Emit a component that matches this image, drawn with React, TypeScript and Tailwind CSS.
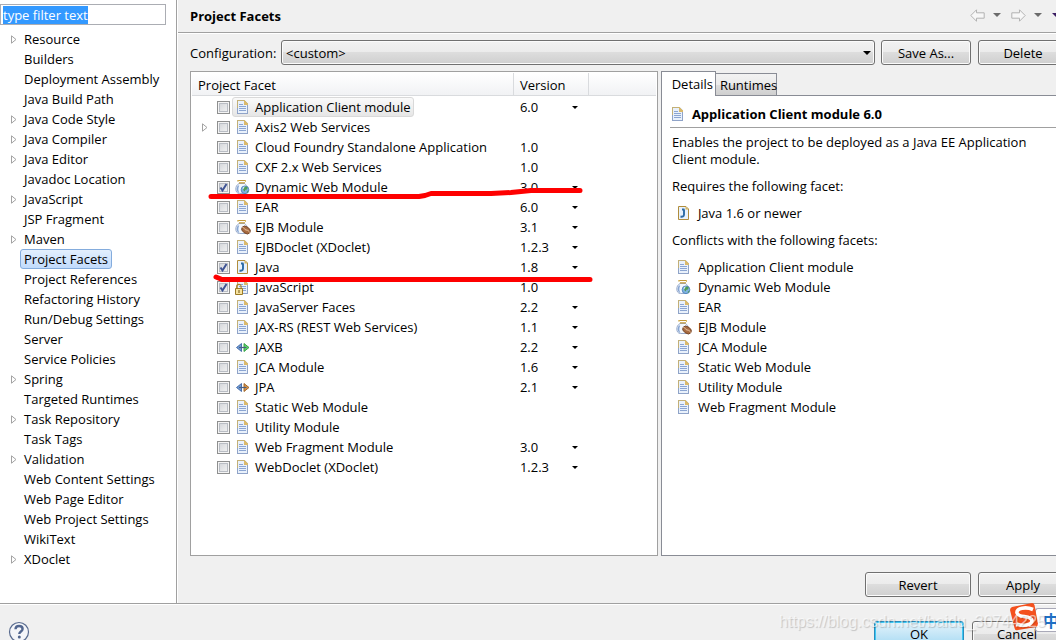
import { useEffect, useRef } from 'react'
import type { ReactNode } from 'react'
import clsx from 'clsx'

type IconName = 'doc' | 'web' | 'ejb' | 'java' | 'locked' | 'jaxb' | 'jpa'

interface Facet {
  name: string
  icon?: IconName
  version?: string
  fixed?: boolean
  checked?: boolean
  expandable?: boolean
}

const categories: { name: string; expandable?: boolean }[] = [
  { name: 'Resource', expandable: true },
  { name: 'Builders' },
  { name: 'Deployment Assembly' },
  { name: 'Java Build Path' },
  { name: 'Java Code Style', expandable: true },
  { name: 'Java Compiler', expandable: true },
  { name: 'Java Editor', expandable: true },
  { name: 'Javadoc Location' },
  { name: 'JavaScript', expandable: true },
  { name: 'JSP Fragment' },
  { name: 'Maven', expandable: true },
  { name: 'Project Facets' },
  { name: 'Project References' },
  { name: 'Refactoring History' },
  { name: 'Run/Debug Settings' },
  { name: 'Server' },
  { name: 'Service Policies' },
  { name: 'Spring', expandable: true },
  { name: 'Targeted Runtimes' },
  { name: 'Task Repository', expandable: true },
  { name: 'Task Tags' },
  { name: 'Validation', expandable: true },
  { name: 'Web Content Settings' },
  { name: 'Web Page Editor' },
  { name: 'Web Project Settings' },
  { name: 'WikiText' },
  { name: 'XDoclet', expandable: true },
]

const facets: Facet[] = [
  { name: 'Application Client module', version: '6.0' },
  { name: 'Axis2 Web Services', expandable: true },
  { name: 'Cloud Foundry Standalone Application', version: '1.0', fixed: true },
  { name: 'CXF 2.x Web Services', version: '1.0', fixed: true },
  { name: 'Dynamic Web Module', icon: 'web', version: '3.0', checked: true },
  { name: 'EAR', version: '6.0' },
  { name: 'EJB Module', icon: 'ejb', version: '3.1' },
  { name: 'EJBDoclet (XDoclet)', version: '1.2.3' },
  { name: 'Java', icon: 'java', version: '1.8', checked: true },
  { name: 'JavaScript', icon: 'locked', version: '1.0', fixed: true, checked: true },
  { name: 'JavaServer Faces', version: '2.2' },
  { name: 'JAX-RS (REST Web Services)', version: '1.1' },
  { name: 'JAXB', icon: 'jaxb', version: '2.2' },
  { name: 'JCA Module', version: '1.6' },
  { name: 'JPA', icon: 'jpa', version: '2.1' },
  { name: 'Static Web Module' },
  { name: 'Utility Module' },
  { name: 'Web Fragment Module', version: '3.0' },
  { name: 'WebDoclet (XDoclet)', version: '1.2.3' },
]

const conflicts: { name: string; icon?: IconName }[] = [
  { name: 'Application Client module' },
  { name: 'Dynamic Web Module', icon: 'web' },
  { name: 'EAR' },
  { name: 'EJB Module', icon: 'ejb' },
  { name: 'JCA Module' },
  { name: 'Static Web Module' },
  { name: 'Utility Module' },
  { name: 'Web Fragment Module' },
]

function Page() {
  return (
    <g shapeRendering="crispEdges">
      <path d="M3 1h7l3 3v11H3z" fill="#e9f1fb" />
      <path d="M2 1h8v1H3v7H2z" fill="#c3b077" />
      <path d="M2 9h1v5h10v1H2zM12 5h1v10h-1z" fill="#8fa3c8" />
      <path d="M9 1h1v1h1v1h1v1h1v2H9z" fill="#d9b96c" />
      <path d="M4 5h4v1H4zM4 7h7v1H4zM4 9h7v1H4zM4 11h7v1H4z" fill="#8ba5d2" />
    </g>
  )
}

function Jar() {
  return (
    <g>
      <path d="M4 4.500C1.500 6 .8 8 .8 10c0 2.500 1.200 4.500 3.700 4.500h6c1.500-1 2-3 1.800-5C12 7 11 5.500 9.500 4.500z" fill="#f3f8fd" stroke="#8fa3c6" strokeWidth=".9" />
      <path d="M3 6.500C.8 9 1.200 13 4.500 14 3 12 3 9 4.200 6.500z" fill="#88a6d3" />
      <path d="M2.500 1.500h8.500M4 3.800h6" stroke="#c49a3b" strokeWidth="1.200" />
      <path d="M3 1v2M10.500 1v2" stroke="#dcbd66" />
    </g>
  )
}

function Icon({ name = 'doc' }: { name?: IconName }) {
  return (
    <svg viewBox="0 0 16 16" className="size-4 shrink-0" aria-hidden="true">
      {name === 'doc' && <Page />}
      {name === 'web' && (
        <>
          <Jar />
          <circle cx="10" cy="10.800" r="3.900" fill="#7fb2e0" stroke="#4a7cb8" strokeWidth=".8" />
          <path d="M9 8c1.500-1 3-.5 3.800.5l-.8 2-1.500.3-1 1.700C8 11.500 7.800 9.500 9 8zM12 12.500l1.500-1c0 1.200-.8 2.200-1.800 2.600z" fill="#4f9d55" />
          <path d="M7.500 9.500c.5-1.200 1.200-1.800 2.200-2l-1 2.300z" fill="#e6f3fb" />
        </>
      )}
      {name === 'ejb' && (
        <>
          <Jar />
          <g transform="rotate(35 11 11)">
            <ellipse cx="11" cy="11" rx="4.700" ry="3.300" fill="#a76b42" stroke="#6d3f22" strokeWidth=".8" />
            <path d="M6.500 11c2-1.500 3 1 4.500 0s3-1 4.500 0" fill="none" stroke="#f0cda8" strokeWidth=".8" />
          </g>
        </>
      )}
      {name === 'java' && (
        <g>
          <path d="M3 1.500h7L12.500 4v10.500H3z" fill="#e8f2fc" />
          <path d="M2.500 1.500H10L12.500 4v10.500h-10z" fill="none" stroke="#b08d3c" />
          <path d="M9.500 1.500v3h3z" fill="#d7b45d" />
          <path d="M6 4.500h2.500M8 4.500v5c0 2-1.500 2.500-3.500 2" fill="none" stroke="#2c6aa5" strokeWidth="1.900" />
        </g>
      )}
      {name === 'locked' && (
        <>
          <Page />
          <path d="M1.700 9.500V7.500a2.200 2.200 0 0 1 4.400 0v2" fill="none" stroke="#a8852c" strokeWidth="1.200" />
          <path d="M.5 9.500h7v6h-7z" fill="#f7e3a0" stroke="#9b7a25" />
          <path d="M3.500 11h1v3h-1z" fill="#6e5517" />
        </>
      )}
      {(name === 'jaxb' || name === 'jpa') && (
        <g strokeWidth=".9" strokeLinejoin="round">
          <path d="M6.500 4.500v8L1.500 8.500z" fill="#6f9cd6" stroke="#3f67a5" />
          <path
            d="M9 4.500v8l5-4z"
            fill={name === 'jaxb' ? '#5fd66a' : '#d9964a'}
            stroke={name === 'jaxb' ? '#2d9a3d' : '#9a5f22'}
          />
          <path d="M4 8.500h7.500" stroke="#4b5f80" strokeWidth="1.200" />
        </g>
      )}
    </svg>
  )
}

function TreeArrow() {
  return (
    <svg viewBox="0 0 6 9" className="h-[9px] w-[6px]" aria-hidden="true">
      <path d="M.5.8v7.400L5 4.500z" fill="#fff" stroke="#a3a3a3" />
    </svg>
  )
}

function Caret({ className = 'h-1 w-2' }: { className?: string }) {
  return (
    <svg
      viewBox="0 0 8 4"
      className={clsx('pointer-events-none shrink-0', className)}
      aria-hidden="true">
      <path d="M0 0h8L4 4z" fill="currentColor" />
    </svg>
  )
}

function HistoryArrow({ flip }: { flip?: boolean }) {
  return (
    <svg viewBox="0 0 15 13" className={clsx('h-[13px] w-[15px]', flip && '-scale-x-100')} aria-hidden="true">
      <path d="M.8 6.500 6.500.8v3h7.700v5.400H6.500v3z" fill="#f7f7f7" stroke="#b3b3b3" strokeLinejoin="round" />
    </svg>
  )
}

function PushButton({
  children,
  className,
  primary,
}: {
  children: ReactNode
  className: string
  primary?: boolean
}) {
  return (
    <button
      type="button"
      className={clsx(
        'h-[25px] shrink-0 rounded-[3px] border',
        primary
          ? 'border-[#2a8dbd] bg-linear-to-b from-[#e4f3fb] to-[#a9dbf3] shadow-[inset_0_0_0_1px_#3fc8f4]'
          : 'border-[#707070] bg-[linear-gradient(#f2f2f2,#ebebeb_50%,#dddddd_50%,#cfcfcf)] shadow-[inset_0_0_0_1px_#fbfbfb]',
        className
      )}>
      {children}
    </button>
  )
}

function FacetRow({ facet, focused }: { facet: Facet; focused: boolean }) {
  return (
    <tr className="h-5">
      <td className="p-0">
        <div className="flex h-5 items-center pl-2.5">
          <span className="w-[15px]">{facet.expandable && <TreeArrow />}</span>
          <label className="flex items-center">
            <span className="relative flex">
              <input
                type="checkbox"
                defaultChecked={facet.checked}
                className="peer size-[13px] appearance-none border border-[#8e8f8f] bg-linear-to-br from-[#cfd2d6] to-[#f6f6f6] shadow-[inset_0_0_0_1px_#f4f4f4,inset_0_0_0_2px_#b9bdc4]"
              />
              <svg
                viewBox="0 0 13 13"
                className="pointer-events-none absolute inset-0 hidden size-[13px] peer-checked:block"
                aria-hidden="true">
                <path d="M3.500 6.500 5.500 9.500 9.500 3" fill="none" stroke="#3f5494" strokeWidth="2" />
              </svg>
            </span>
            <span
              className={clsx(
                'ml-0.5 flex h-5 items-center gap-1 rounded-[3px] border px-0.5',
                focused
                  ? 'border-[#d9d9d9] bg-linear-to-b from-[#fafafa] to-[#e6e6e6]'
                  : 'border-transparent'
              )}>
              <Icon name={facet.icon} />
              <span className="whitespace-nowrap">{facet.name}</span>
            </span>
          </label>
        </div>
      </td>
      <td className="p-0 pl-1.5">
        {facet.version && facet.fixed && facet.version}
        {facet.version && !facet.fixed && (
          <div className="relative flex w-[58px] items-center">
            <select
              aria-label={`${facet.name} version`}
              className="h-5 w-full appearance-none bg-transparent leading-5">
              <option>{facet.version}</option>
            </select>
            <Caret className="absolute right-0 h-[3px] w-1.5" />
          </div>
        )}
      </td>
      <td className="p-0" />
    </tr>
  )
}

export default function App() {
  const filterRef = useRef<HTMLInputElement>(null)

  useEffect(() => {
    filterRef.current?.focus()
    filterRef.current?.select()
  }, [])

  return (
    <div className="relative flex h-screen flex-col overflow-hidden bg-[#f0f0f0] font-['Open_Sans',sans-serif] text-[13px] leading-5 text-black">
      <div className="flex min-h-0 flex-1 border-b border-[#a0a0a0]">
        <aside className="w-[177px] shrink-0 border-r border-[#a0a0a0] bg-white pt-1">
          <input
            ref={filterRef}
            aria-label="Filter categories"
            defaultValue="type filter text"
            className="block h-[21px] w-[166px] border border-[#abadb3] bg-white px-0.5 leading-4 outline-none selection:bg-[#3399ff] selection:text-white"
          />
          <ul className="pt-1">
            {categories.map(({ name, expandable }) => (
              <li key={name} className="flex h-5 items-center pl-[11px]">
                <span className="w-[9px]">{expandable && <TreeArrow />}</span>
                <button
                  type="button"
                  className={clsx(
                    'flex h-5 items-center rounded-[3px] border px-[3px] whitespace-nowrap',
                    name === 'Project Facets'
                      ? 'border-[#84acdd] bg-linear-to-b from-[#e3effd] to-[#c1dbfc]'
                      : 'border-transparent'
                  )}>
                  {name}
                </button>
              </li>
            ))}
          </ul>
        </aside>

        {/* the dialog is wider than the window, so this side runs past its edge */}
        <main className="-mr-3 flex min-w-0 flex-1 flex-col border-l border-white">
          <header className="flex h-[33px] shrink-0 items-center justify-between border-b border-[#a0a0a0] pr-2 pl-3 shadow-[0_1px_0_#fff]">
            <h1 className="font-bold">Project Facets</h1>
            <div className="flex items-center gap-2.5 pb-0.5 text-[#6b6b6b]">
              <div className="flex items-center gap-2">
                <button type="button" aria-label="Back">
                  <HistoryArrow />
                </button>
                <button type="button" aria-label="Back history">
                  <Caret />
                </button>
              </div>
              <div className="flex items-center gap-2">
                <button type="button" aria-label="Forward">
                  <HistoryArrow flip />
                </button>
                <button type="button" aria-label="Forward history">
                  <Caret />
                </button>
              </div>
              <button type="button" aria-label="Menu" className="text-[#3b1d63]">
                <Caret />
              </button>
            </div>
          </header>

          <div className="flex min-h-0 flex-1 flex-col pt-[7px] pb-[6px] pl-3">
            <div className="flex items-center">
              <label htmlFor="configuration" className="w-[91px] shrink-0">
                Configuration:
              </label>
              <div className="relative flex min-w-0 flex-1 items-center">
                <select
                  id="configuration"
                  className="h-[25px] w-full appearance-none rounded-[3px] border border-[#707070] bg-[linear-gradient(#f2f2f2,#ebebeb_50%,#dddddd_50%,#cfcfcf)] px-1 shadow-[inset_0_0_0_1px_#fbfbfb]">
                  <option>&lt;custom&gt;</option>
                </select>
                <Caret className="absolute right-1 h-1 w-2" />
              </div>
              <PushButton className="ml-1.5 w-[90px]">Save As...</PushButton>
              <PushButton className="ml-[7px] w-[90px]">Delete</PushButton>
            </div>

            <div className="mt-1.5 flex min-h-0 flex-1 gap-[3px]">
              <section className="relative min-w-0 flex-[466] border border-[#a0a0a0] bg-white p-px">
                <table className="w-full table-fixed border-separate border-spacing-0 text-left">
                  <colgroup>
                    <col />
                    <col className="w-[75px]" />
                    <col className="w-[67px]" />
                  </colgroup>
                  <thead>
                    <tr>
                      <th className="p-0 pb-px font-normal">
                        <div className="h-[23px] border-r border-b border-[#d9dbde] bg-linear-to-b from-white to-[#f1f2f4] pl-1.5 leading-6">
                          Project Facet
                        </div>
                      </th>
                      <th className="p-0 pb-px font-normal">
                        <div className="h-[23px] border-r border-b border-[#d9dbde] bg-linear-to-b from-white to-[#f1f2f4] pl-1.5 leading-6">
                          Version
                        </div>
                      </th>
                      <td className="p-0 pb-px">
                        <div className="h-[23px] border-b border-[#d9dbde] bg-linear-to-b from-white to-[#f1f2f4]" />
                      </td>
                    </tr>
                  </thead>
                  <tbody>
                    {facets.map((facet, index) => (
                      <FacetRow key={facet.name} facet={facet} focused={index === 0} />
                    ))}
                  </tbody>
                </table>
                {/* hand-drawn underlines below the two required facets */}
                <svg
                  viewBox="0 0 390 100"
                  className="pointer-events-none absolute top-[111px] left-4 h-[100px] w-[390px]"
                  fill="none"
                  stroke="#fe0000"
                  strokeWidth="5"
                  strokeLinecap="round"
                  strokeLinejoin="round"
                  aria-hidden="true">
                  <path d="M4 13.500h208l6-1 6-2h60l20-1 10-1 10-1h49" />
                  <path d="M9 94l6 2.500h368" />
                </svg>
              </section>

              <section className="flex min-w-0 flex-[409] flex-col">
                <div role="tablist" className="flex h-6 shrink-0 items-end">
                  <button
                    type="button"
                    role="tab"
                    aria-selected="true"
                    className="relative -mb-px h-[25px] w-[55px] border border-b-0 border-[#898c95] bg-white pl-2">
                    Details
                  </button>
                  <button
                    type="button"
                    role="tab"
                    aria-selected="false"
                    className="h-[22px] w-[61px] border border-b-0 border-l-0 border-[#898c95] bg-[linear-gradient(#f2f2f2,#ebebeb_50%,#dddddd_50%,#cfcfcf)] pl-1">
                    Runtimes
                  </button>
                </div>
                <div role="tabpanel" className="min-h-0 flex-1 border border-[#898c95] bg-white pl-2">
                  <div className="flex h-8 items-center gap-1.5 border-b border-[#a0a0a0] pt-1">
                    <Icon />
                    <h2 className="font-bold">Application Client module 6.0</h2>
                  </div>
                  <div className="pr-6 pl-0.5">
                    <p className="pt-1.5 leading-[17px]">
                      Enables the project to be deployed as a Java EE Application Client module.
                    </p>
                    <p className="pt-2">Requires the following facet:</p>
                    <ul className="py-[7px] pl-1">
                      <li className="flex items-center gap-1.5">
                        <Icon name="java" />
                        Java 1.6 or newer
                      </li>
                    </ul>
                    <p>Conflicts with the following facets:</p>
                    <ul className="pt-[7px] pl-1">
                      {conflicts.map(({ name, icon }) => (
                        <li key={name} className="flex items-center gap-1.5">
                          <Icon name={icon} />
                          {name}
                        </li>
                      ))}
                    </ul>
                  </div>
                </div>
              </section>
            </div>

            <div className="mt-4 flex justify-end gap-[7px]">
              <PushButton className="w-[106px]">Revert</PushButton>
              <PushButton className="w-[90px]">Apply</PushButton>
            </div>
          </div>
        </main>
      </div>

      <footer className="-mr-1.5 flex h-9 shrink-0 items-start justify-between overflow-hidden border-t border-white pt-4 pl-2">
        <button type="button" aria-label="Help">
          <svg viewBox="0 0 22 22" className="size-[22px]" aria-hidden="true">
            <circle cx="11" cy="11" r="9.500" fill="#f5f6f9" stroke="#596b8f" strokeWidth="1.200" />
            <path d="M7.500 8.300C7.600 6 9 5 11 5s3.600 1.100 3.600 3c0 2.500-3.300 2.600-3.300 5" fill="none" stroke="#52668f" strokeWidth="2.400" />
            <circle cx="11.300" cy="16" r="1.500" fill="#52668f" />
          </svg>
        </button>
        <div className="flex gap-2">
          <PushButton primary className="w-[90px]">
            OK
          </PushButton>
          <PushButton className="w-[90px]">Cancel</PushButton>
        </div>
      </footer>

      <div className="pointer-events-none absolute right-0 bottom-2 flex h-6 w-[21px] items-center overflow-hidden rounded-l-[3px] border border-r-0 border-[#a9a9b8] bg-white pl-[7px] font-['Noto_Sans_CJK_SC',sans-serif] text-[16px] font-bold text-[#1f6fc4]">
        中
      </div>
      <svg
        viewBox="0 0 30 30"
        className="pointer-events-none absolute right-[17px] bottom-2 size-[30px]"
        aria-hidden="true">
        <path d="M3 5 23 1q2 0 2.500 2L29 22q0 2-2 3L9 28q-3 1-3.500-2L1 8q0-2 2-3z" fill="#f4511e" />
        <path d="M24 7.500C17 4.500 7 6 8 11c1 5 14 2 15 7.500 0 5-10 6-15.500 3.500" fill="none" stroke="#fff" strokeWidth="3.600" />
      </svg>
      <span className="pointer-events-none absolute right-2.5 bottom-1.5 font-['Liberation_Sans',sans-serif] text-[16px] leading-6 text-white/60 [text-shadow:1px_1px_1px_#00000030]">
        https://blog.csdn.net/baidu_30744225
      </span>
    </div>
  )
}
